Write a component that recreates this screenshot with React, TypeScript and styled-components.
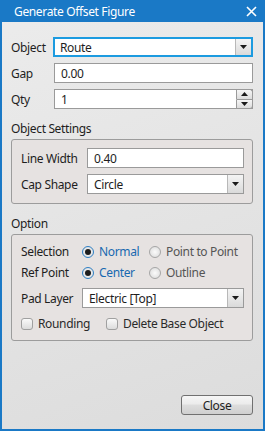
import styled, { createGlobalStyle } from "styled-components"

const Global = createGlobalStyle`
  html, body {
    margin: 0;
    padding: 0;
    width: 265px;
    height: 431px;
    overflow: hidden;
  }
  body {
    font-family: "Noto Sans", "Open Sans", sans-serif;
    font-size: 12px;
    letter-spacing: -0.35px;
    color: #1e1e1e;
  }
`

const Window = styled.div`
  width: 265px;
  height: 431px;
  box-sizing: border-box;
  border: 2px solid #1a79c6;
  border-top: none;
  display: flex;
  flex-direction: column;
  background: linear-gradient(160deg, #ececec 0%, #dcdcdc 100%);
`

const TitleBar = styled.div`
  height: 22px;
  margin: 0 -2px;
  padding: 0 8px 0 14px;
  background: #1a79c6;
  color: #fff;
  display: flex;
  align-items: center;
  justify-content: space-between;
  font-size: 12px;
`

const Body = styled.div`
  flex: 1;
  display: flex;
  flex-direction: column;
  padding: 15px 10px 14px 9px;
`

const Rows = styled.div<{ $gap?: number }>`
  display: flex;
  flex-direction: column;
  gap: ${(p) => p.$gap ?? 6}px;
`

const Row = styled.div<{ $label: number; $h?: number; $top?: number }>`
  display: grid;
  grid-template-columns: ${(p) => p.$label}px 1fr;
  align-items: center;
  height: ${(p) => p.$h ?? 20}px;
  margin-top: ${(p) => p.$top ?? 0}px;
`

const Label = styled.span`
  white-space: nowrap;
`

const SectionTitle = styled.div<{ $top: number }>`
  margin-top: ${(p) => p.$top}px;
  height: 15px;
  line-height: 15px;
  margin-bottom: 3px;
`

const Group = styled.div<{ $pt: number; $pb: number }>`
  border: 1px solid #9c9c9c;
  border-radius: 3px;
  background: #e6e2e1;
  padding: ${(p) => p.$pt}px 8px ${(p) => p.$pb}px 9px;
`

const TextBox = styled.div<{ $focus?: boolean }>`
  height: 20px;
  box-sizing: border-box;
  background: #fff;
  border: ${(p) => (p.$focus ? "2px solid #1c9be0" : "1px solid #9a9a9a")};
  display: flex;
  align-items: center;
  padding-left: ${(p) => (p.$focus ? 5 : 6)}px;
  position: relative;
`

const DropButton = styled.div`
  position: absolute;
  right: 0;
  top: 0;
  bottom: 0;
  width: 15px;
  border-left: 1px solid #b8b8b8;
  background: linear-gradient(#f4f4f4, #dadada);
  display: flex;
  align-items: center;
  justify-content: center;
`

const Spin = styled.div`
  position: absolute;
  right: -1px;
  top: -1px;
  bottom: -1px;
  width: 17px;
  display: flex;
  flex-direction: column;
  > div {
    flex: 1;
    border: 1px solid #9a9a9a;
    background: linear-gradient(#f6f6f6, #dcdcdc);
    display: flex;
    align-items: center;
    justify-content: center;
  }
  > div:first-child {
    border-radius: 0 3px 0 0;
    border-bottom: none;
  }
  > div:last-child {
    border-radius: 0 0 3px 0;
  }
`

const Choices = styled.div`
  display: grid;
  grid-template-columns: 67px 1fr;
  align-items: center;
`

const Choice = styled.div<{ $on?: boolean }>`
  display: flex;
  align-items: center;
  gap: 5px;
  color: ${(p) => (p.$on ? "#1869b0" : "#555")};
  white-space: nowrap;
`

const Radio = styled.span<{ $on?: boolean }>`
  width: 12px;
  height: 12px;
  box-sizing: border-box;
  border-radius: 50%;
  border: 1px solid ${(p) => (p.$on ? "#2e7fc4" : "#a6a6a6")};
  background: radial-gradient(circle, #fbfbfb, #d8d8d8);
  display: flex;
  align-items: center;
  justify-content: center;
  &::after {
    content: "";
    width: 6px;
    height: 6px;
    border-radius: 50%;
    background: ${(p) => (p.$on ? "#1d1d1d" : "transparent")};
  }
`

const Checks = styled.div`
  display: grid;
  grid-template-columns: 85px 1fr;
  align-items: center;
  margin-top: 2px;
  height: 16px;
`

const Check = styled.div`
  display: flex;
  align-items: center;
  gap: 5px;
  white-space: nowrap;
  color: #2a2a2a;
  &::before {
    content: "";
    width: 12px;
    height: 12px;
    box-sizing: border-box;
    border: 1px solid #a0a0a0;
    border-radius: 3px;
    background: linear-gradient(#fafafa, #dcdcdc);
  }
`

const Footer = styled.div`
  margin-top: auto;
  display: flex;
  justify-content: flex-end;
`

const Button = styled.div`
  width: 72px;
  height: 20px;
  box-sizing: border-box;
  border: 1px solid #707070;
  border-radius: 3px;
  background: linear-gradient(#f6f6f6 0%, #ebebeb 45%, #dddddd 50%, #cfcfcf 100%);
  display: flex;
  align-items: center;
  justify-content: center;
`

const Arrow = ({ up }: { up?: boolean }) => (
  <svg width="7" height="4" viewBox="0 0 7 4">
    <path d={up ? "M0 4 L3.5 0 L7 4 Z" : "M0 0 L7 0 L3.5 4 Z"} fill="#1a1a1a" />
  </svg>
)

const Combo = ({ value, focus }: { value: string; focus?: boolean }) => (
  <TextBox $focus={focus}>
    {value}
    <DropButton>
      <Arrow />
    </DropButton>
  </TextBox>
)

const App = () => {
  return (
    <>
      <Global />
      <Window>
        <TitleBar>
          <span>Generate Offset Figure</span>
          <svg width="11" height="11" viewBox="0 0 11 11">
            <path d="M1 1 L10 10 M10 1 L1 10" stroke="#fff" strokeWidth="1.6" />
          </svg>
        </TitleBar>
        <Body>
          <Rows>
            <Row $label={42}>
              <Label>Object</Label>
              <Combo value="Route" focus />
            </Row>
            <Row $label={43}>
              <Label>Gap</Label>
              <TextBox>0.00</TextBox>
            </Row>
            <Row $label={43}>
              <Label>Qty</Label>
              <TextBox>
                1
                <Spin>
                  <div>
                    <Arrow up />
                  </div>
                  <div>
                    <Arrow />
                  </div>
                </Spin>
              </TextBox>
            </Row>
          </Rows>

          <SectionTitle $top={12}>Object Settings</SectionTitle>
          <Group $pt={8} $pb={9}>
            <Rows>
              <Row $label={66}>
                <Label>Line Width</Label>
                <TextBox>0.40</TextBox>
              </Row>
              <Row $label={66}>
                <Label>Cap Shape</Label>
                <Combo value="Circle" />
              </Row>
            </Rows>
          </Group>

          <SectionTitle $top={12}>Option</SectionTitle>
          <Group $pt={8} $pb={9}>
            <Rows $gap={5}>
              <Row $label={61} $h={16}>
                <Label>Selection</Label>
                <Choices>
                  <Choice $on>
                    <Radio $on />
                    Normal
                  </Choice>
                  <Choice>
                    <Radio />
                    Point to Point
                  </Choice>
                </Choices>
              </Row>
              <Row $label={61} $h={16}>
                <Label>Ref Point</Label>
                <Choices>
                  <Choice $on>
                    <Radio $on />
                    Center
                  </Choice>
                  <Choice>
                    <Radio />
                    Outline
                  </Choice>
                </Choices>
              </Row>
              <Row $label={61} $h={20} $top={3}>
                <Label>Pad Layer</Label>
                <Combo value="Electric [Top]" />
              </Row>
              <Checks>
                <Check>Rounding</Check>
                <Check>Delete Base Object</Check>
              </Checks>
            </Rows>
          </Group>

          <Footer>
            <Button>Close</Button>
          </Footer>
        </Body>
      </Window>
    </>
  )
}

export default App
